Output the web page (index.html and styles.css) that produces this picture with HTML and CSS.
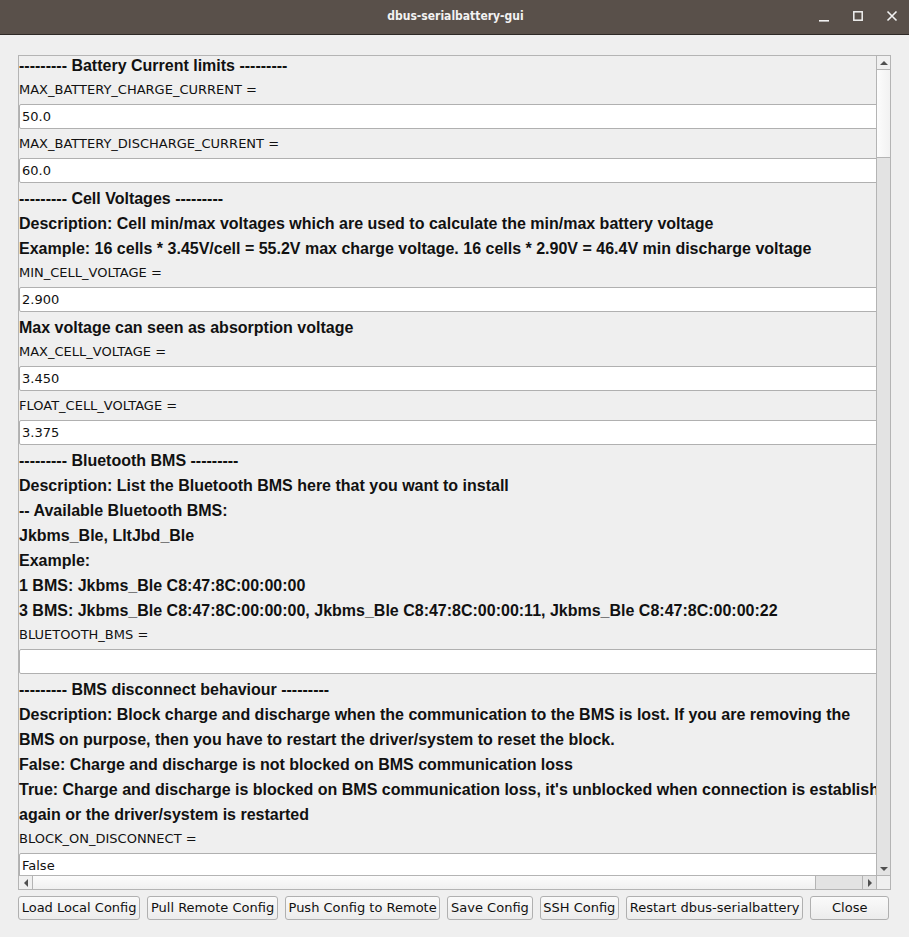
FILE: index.html
```html
<!DOCTYPE html>
<html>
<head>
<meta charset="utf-8">
<link rel="stylesheet" href="styles.css">
</head>
<body>
<div class="window">
  <div class="titlebar">
    <div class="title">dbus-serialbattery-gui</div>
    <div class="controls">
      <svg class="ctl" width="14" height="14" viewBox="0 0 14 14"><rect x="2" y="11" width="10" height="1.6" fill="#f2f2f2"/></svg>
      <svg class="ctl" width="14" height="14" viewBox="0 0 14 14"><rect x="2.8" y="2.8" width="8.4" height="8.4" fill="none" stroke="#f2f2f2" stroke-width="1.5"/></svg>
      <svg class="ctl" width="14" height="14" viewBox="0 0 14 14"><path d="M2.5 2.5 L11.5 11.5 M11.5 2.5 L2.5 11.5" stroke="#f2f2f2" stroke-width="1.6"/></svg>
    </div>
  </div>
  <div class="body">
    <div class="frame">
      <div class="viewport">
        <div class="content">
          <div class="bold">--------- Battery Current limits ---------</div>
          <div class="label">MAX_BATTERY_CHARGE_CURRENT =</div>
          <div class="entry">50.0</div>
          <div class="label">MAX_BATTERY_DISCHARGE_CURRENT =</div>
          <div class="entry">60.0</div>
          <div class="bold">--------- Cell Voltages ---------</div>
          <div class="bold">Description: Cell min/max voltages which are used to calculate the min/max battery voltage</div>
          <div class="bold">Example: 16 cells * 3.45V/cell = 55.2V max charge voltage. 16 cells * 2.90V = 46.4V min discharge voltage</div>
          <div class="label">MIN_CELL_VOLTAGE =</div>
          <div class="entry">2.900</div>
          <div class="bold">Max voltage can seen as absorption voltage</div>
          <div class="label">MAX_CELL_VOLTAGE =</div>
          <div class="entry">3.450</div>
          <div class="label">FLOAT_CELL_VOLTAGE =</div>
          <div class="entry">3.375</div>
          <div class="bold">--------- Bluetooth BMS ---------</div>
          <div class="bold">Description: List the Bluetooth BMS here that you want to install</div>
          <div class="bold">-- Available Bluetooth BMS:</div>
          <div class="bold">Jkbms_Ble, LltJbd_Ble</div>
          <div class="bold">Example:</div>
          <div class="bold">1 BMS: Jkbms_Ble C8:47:8C:00:00:00</div>
          <div class="bold">3 BMS: Jkbms_Ble C8:47:8C:00:00:00, Jkbms_Ble C8:47:8C:00:00:11, Jkbms_Ble C8:47:8C:00:00:22</div>
          <div class="label">BLUETOOTH_BMS =</div>
          <div class="entry"></div>
          <div class="bold">--------- BMS disconnect behaviour ---------</div>
          <div class="bold">Description: Block charge and discharge when the communication to the BMS is lost. If you are removing the</div>
          <div class="bold">BMS on purpose, then you have to restart the driver/system to reset the block.</div>
          <div class="bold">False: Charge and discharge is not blocked on BMS communication loss</div>
          <div class="bold">True: Charge and discharge is blocked on BMS communication loss, it's unblocked when connection is established</div>
          <div class="bold">again or the driver/system is restarted</div>
          <div class="label">BLOCK_ON_DISCONNECT =</div>
          <div class="entry">False</div>
        </div>
      </div>
      <div class="vscroll">
        <div class="arrow-btn up"><span class="tri-up"></span></div>
        <div class="vthumb"></div>
        <div class="vtrough"></div>
        <div class="arrow-btn down"><span class="tri-down"></span></div>
      </div>
      <div class="hscroll">
        <div class="arrow-btn left"><span class="tri-left"></span></div>
        <div class="hthumb"></div>
        <div class="htrough"></div>
        <div class="arrow-btn right"><span class="tri-right"></span></div>
      </div>
      <div class="corner"></div>
    </div>
    <div class="buttons">
      <button class="btn">Load Local Config</button>
      <button class="btn">Pull Remote Config</button>
      <button class="btn">Push Config to Remote</button>
      <button class="btn">Save Config</button>
      <button class="btn">SSH Config</button>
      <button class="btn">Restart dbus-serialbattery</button>
      <button class="btn close">Close</button>
    </div>
  </div>
</div>
</body>
</html>
```
FILE: styles.css
```css
html, body {
  margin: 0;
  padding: 0;
  background: #efefef;
}
.window {
  width: 909px;
  height: 937px;
  display: flex;
  flex-direction: column;
  overflow: hidden;
}
.titlebar {
  height: 34px;
  background: #59504a;
  border-bottom: 1px solid #2e2926;
  display: flex;
  align-items: center;
  justify-content: center;
  position: relative;
  flex: none;
}
.title {
  color: #f2f2f2;
  font-family: "DejaVu Sans Condensed", "DejaVu Sans", sans-serif;
  font-stretch: condensed;
  font-weight: bold;
  font-size: 12px;
  margin-top: -3px;
  margin-left: 2px;
}
.controls {
  position: absolute;
  right: 10px;
  top: 9px;
  display: flex;
  gap: 20px;
}
.ctl { display: block; }
.body {
  flex: 1;
  padding: 20px 18px 0 18px;
  display: flex;
  flex-direction: column;
}
.frame {
  width: 871px;
  height: 833px;
  border: 1px solid #b4b4b4;
  display: grid;
  grid-template-columns: 857px 14px;
  grid-template-rows: 819px 14px;
  background: #efefef;
}
.viewport {
  overflow: hidden;
  grid-column: 1;
  grid-row: 1;
}
.content {
  width: 910px;
  margin-top: -3px;
  color: #111;
}
.bold {
  font-family: "Liberation Sans", Arial, sans-serif;
  font-weight: bold;
  font-size: 16px;
  height: 25px;
  line-height: 25px;
  white-space: nowrap;
}
.label {
  font-family: "DejaVu Sans", sans-serif;
  font-size: 13px;
  height: 21px;
  padding-top: 1px;
  line-height: 22px;
  white-space: nowrap;
}
.entry {
  margin: 4px 0 3px 0;
  height: 23px;
  border: 1px solid #b0b0b0;
  border-radius: 2px;
  background: #fff;
  font-family: "DejaVu Sans", sans-serif;
  font-size: 13px;
  line-height: 23px;
  padding-left: 2px;
  box-sizing: content-box;
}
.vscroll {
  grid-column: 2;
  grid-row: 1;
  border-left: 1px solid #b4b4b4;
  display: flex;
  flex-direction: column;
  background: #e3e3e3;
}
.arrow-btn {
  flex: none;
  display: flex;
  align-items: center;
  justify-content: center;
  background: #f0f0f0;
}
.vscroll .arrow-btn { height: 13px; }
.vscroll .up { border-bottom: 1px solid #b4b4b4; }
.vthumb {
  height: 87px;
  flex: none;
  background: linear-gradient(to right, #fcfcfc, #f2f2f2);
  border-bottom: 1px solid #b4b4b4;
}
.vtrough { flex: 1; }
.vscroll .down { background: #e3e3e3; }
.hscroll {
  grid-column: 1;
  grid-row: 2;
  border-top: 1px solid #b4b4b4;
  display: flex;
  background: #e3e3e3;
}
.hscroll .arrow-btn { width: 13px; }
.hscroll .left { border-right: 1px solid #b4b4b4; }
.hthumb {
  width: 782px;
  flex: none;
  background: linear-gradient(to bottom, #fcfcfc, #f0f0f0);
  border-right: 1px solid #b4b4b4;
}
.htrough { flex: 1; }
.hscroll .right { background: #e3e3e3; border-left: 1px solid #b4b4b4; }
.corner {
  grid-column: 2;
  grid-row: 2;
  border-left: 1px solid #b4b4b4;
  border-top: 1px solid #b4b4b4;
  background: #efefef;
}
.tri-up, .tri-down, .tri-left, .tri-right { width: 0; height: 0; display: block; }
.tri-up { border-left: 4px solid transparent; border-right: 4px solid transparent; border-bottom: 4px solid #505050; }
.tri-down { border-left: 4px solid transparent; border-right: 4px solid transparent; border-top: 4px solid #505050; }
.tri-left { border-top: 4px solid transparent; border-bottom: 4px solid transparent; border-right: 4px solid #505050; }
.tri-right { border-top: 4px solid transparent; border-bottom: 4px solid transparent; border-left: 4px solid #505050; }
.buttons {
  margin-top: 6px;
  display: flex;
  gap: 7px;
}
.btn {
  flex: none;
  white-space: nowrap;
  font-family: "DejaVu Sans", sans-serif;
  font-size: 13px;
  color: #111;
  height: 24px;
  padding: 0 2.7px;
  border: 1px solid #b0b0b0;
  border-radius: 3px;
  background: linear-gradient(to bottom, #fafafa, #ececec);
  margin: 0;
  line-height: 20px;
}
.btn.close { width: 79px; }
```
